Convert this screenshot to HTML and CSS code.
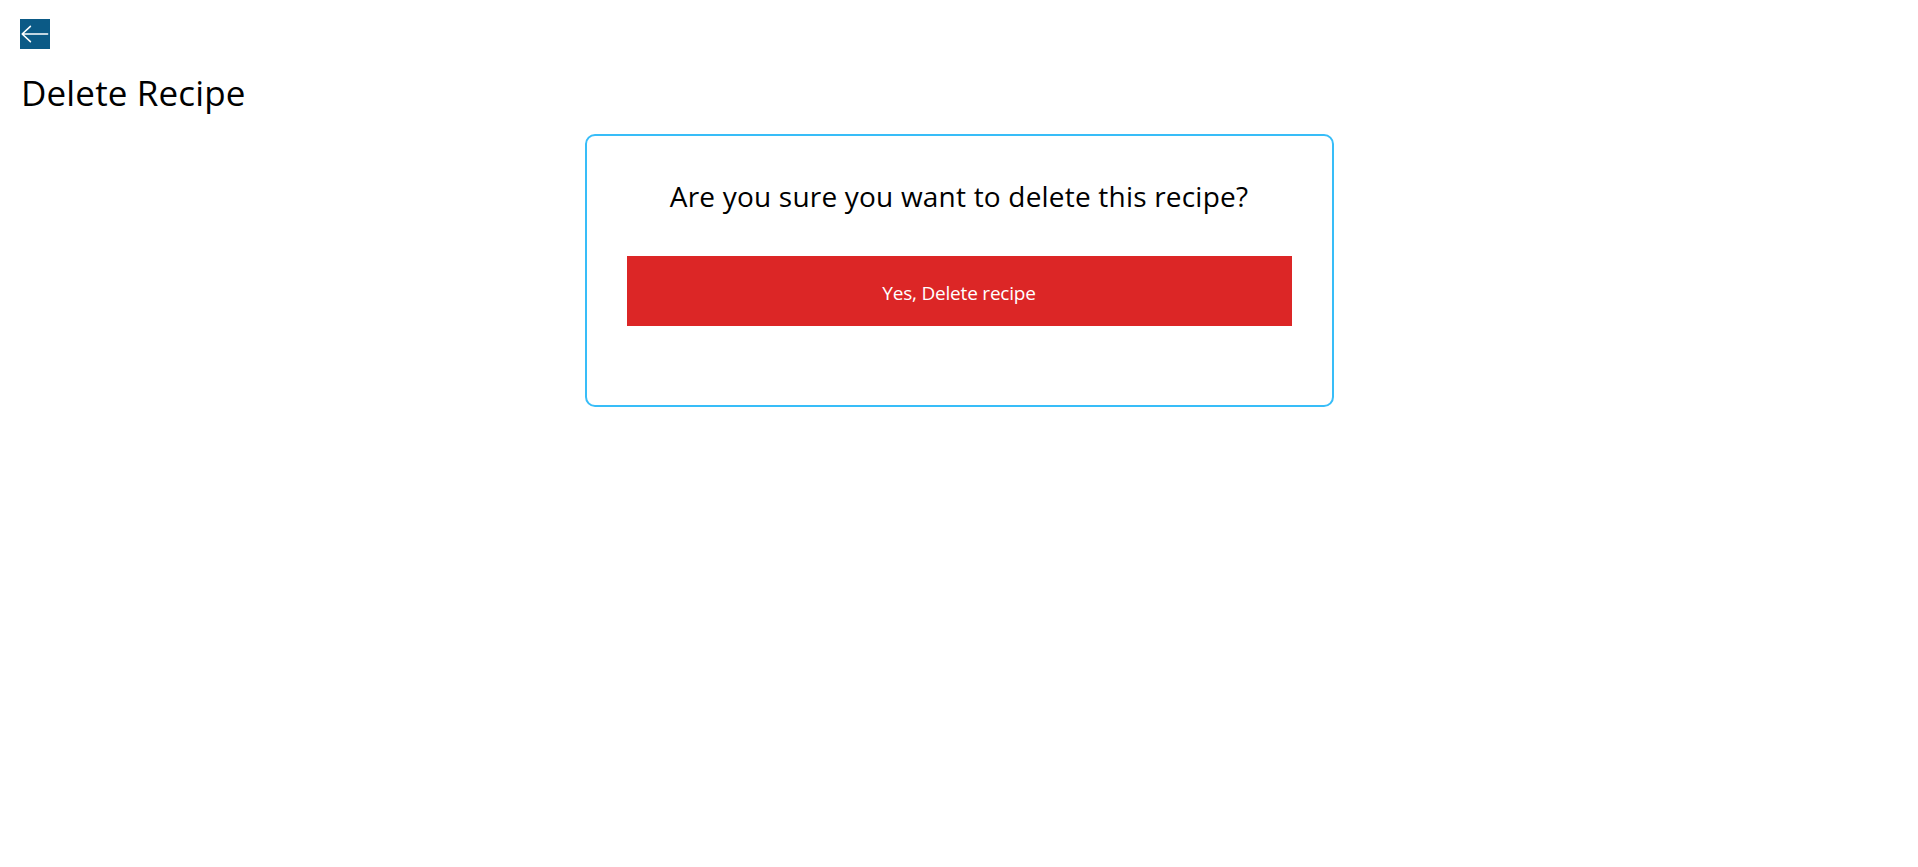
FILE: index.html
```html
<!DOCTYPE html>
<html lang="en">
<head>
<meta charset="utf-8">
<title>Delete Recipe</title>
<link rel="stylesheet" href="styles.css">
</head>
<body>
<div class="page">
  <a class="back" href="#" aria-label="Back">
    <svg width="30" height="30" viewBox="0 0 30 30" aria-hidden="true">
      <path d="M2.2 15 H27.6 M10.4 7.4 L2.2 15 L10.4 22.6" fill="none" stroke="#fff" stroke-width="1.6" stroke-linecap="round" stroke-linejoin="round"/>
    </svg>
  </a>
  <h1 class="title">Delete Recipe</h1>
  <div class="card">
    <p class="question">Are you sure you want to delete this recipe?</p>
    <button class="danger" type="button">Yes, Delete recipe</button>
  </div>
</div>
</body>
</html>
```
FILE: styles.css
```css
html, body {
  margin: 0;
  padding: 0;
  background: #fff;
}
body {
  font-family: "Open Sans", "Noto Sans", "Liberation Sans", sans-serif;
  color: #000;
}
.page {
  padding: 19px 20px;
  display: flex;
  flex-direction: column;
  align-items: flex-start;
}
.back {
  width: 30px;
  height: 30px;
  background: #0b5a86;
  display: block;
}
.back svg {
  display: block;
}
.title {
  margin: 22px 0 0 1px;
  font-size: 35px;
  font-weight: 400;
  line-height: 44px;
  letter-spacing: 0.15px;
}
.card {
  align-self: center;
  box-sizing: border-box;
  width: 749px;
  margin-top: 19px;
  border: 2px solid #38bdf8;
  border-radius: 10px;
  padding: 42px 40px 79px;
  display: flex;
  flex-direction: column;
  align-items: stretch;
}
.question {
  margin: 0;
  text-align: center;
  font-size: 28px;
  line-height: 36px;
  letter-spacing: 0.2px;
}
.danger {
  margin-top: 42px;
  height: 70px;
  padding: 3px 0 0;
  border: 0;
  background: #dc2626;
  color: #fff;
  font-family: inherit;
  font-size: 19px;
  letter-spacing: -0.2px;
  cursor: pointer;
}
```
